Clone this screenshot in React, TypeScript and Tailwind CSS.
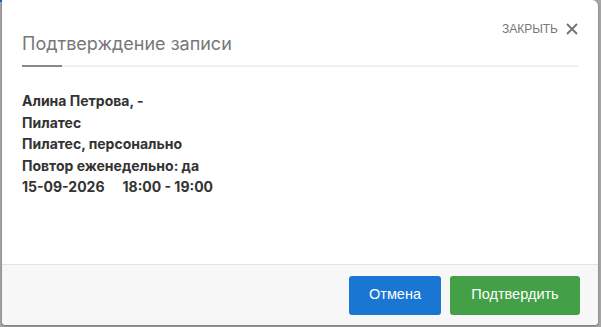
import React from 'react';

const LINES = [
  'Алина Петрова, -',
  'Пилатес',
  'Пилатес, персонально',
  'Повтор еженедельно: да',
];

export default function App() {
  return (
    <div className="relative h-[327px] w-[601px] overflow-hidden bg-[#a6a6a6]" style={{ fontFamily: 'Inter, "Noto Sans", sans-serif' }}>
      {/* page behind the overlay */}
      <div className="absolute left-0 top-0 h-[2px] w-[163px] bg-[#1565c0]" />
      <div className="absolute left-[262px] top-[322px] text-[14px] font-bold text-[#333]">Выберите время</div>

      <div className="absolute left-[2px] top-0 flex h-[325px] w-[596px] flex-col overflow-hidden rounded-b-[4px] rounded-tr-[6px] bg-white shadow-[0_1px_3px_rgba(0,0,0,0.3)]">
        {/* Header */}
        <div className="relative px-[20px] pt-[32px]">
          <button className="absolute right-[20px] top-[20px] flex items-center gap-[8px] text-[12px] text-[#777]" style={{ fontFamily: '"Liberation Sans", Arial, sans-serif' }}>
            ЗАКРЫТЬ
            <svg className="h-[12px] w-[12px]" viewBox="0 0 12 12" fill="none" stroke="#777" strokeWidth={2}>
              <path d="M1 1l10 10M11 1L1 11" />
            </svg>
          </button>
          <h2 className="text-[18px] leading-[24px] text-[#777]">Подтверждение записи</h2>
          <div className="mt-[9px] h-[2px] bg-[#efefef]">
            <div className="h-[2px] w-[40px] bg-[#888]" />
          </div>
        </div>

        {/* Body */}
        <div className="flex-1 px-[20px] pt-[23px] text-[14px] font-bold leading-[21.5px] text-[#333]">
          {LINES.map(l => (
            <div key={l}>{l}</div>
          ))}
          <div>
            15-09-2026<span className="inline-block w-[18px]" />18:00 - 19:00
          </div>
        </div>

        {/* Footer */}
        <div className="flex h-[61px] items-center justify-end gap-[9px] border-t border-[#e3e3e3] bg-[#f7f7f7] px-[18px]" style={{ fontFamily: '"Liberation Sans", Arial, sans-serif' }}>
          <button className="h-[39px] w-[92px] rounded-[3px] bg-[#1976d2] text-[14.5px] text-white">Отмена</button>
          <button className="h-[39px] w-[130px] rounded-[3px] bg-[#43a047] text-[14.5px] text-white">Подтвердить</button>
        </div>
      </div>
    </div>
  );
}
